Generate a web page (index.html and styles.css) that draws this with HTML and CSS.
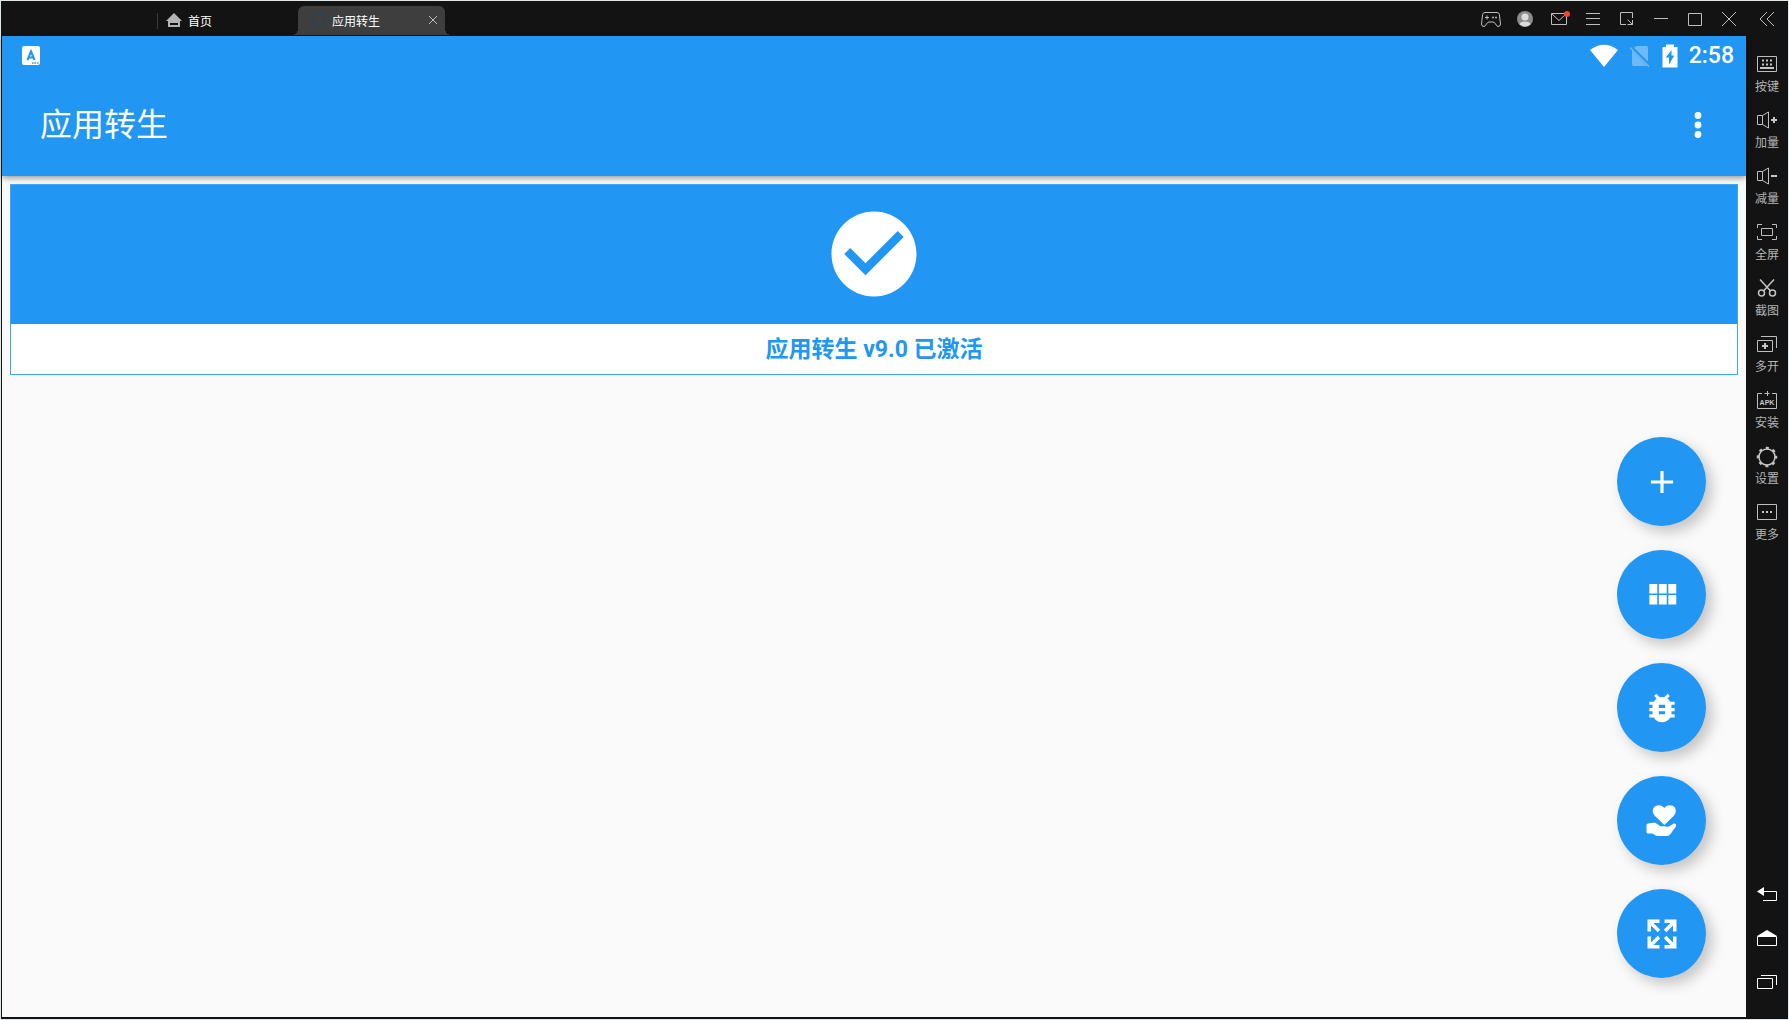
FILE: index.html
```html
<!DOCTYPE html>
<html lang="zh-CN">
<head>
    <meta charset="UTF-8">
    <meta name="viewport" content="width=device-width, initial-scale=1.0">
    <title>应用转生</title>

    <link rel="stylesheet" href="styles.css">
</head>
<body>
    <div class="window">
        <div class="main">
            <header class="titlebar">
                <nav class="tabs">
                    <a class="tab home" href="#">
                        <svg width="16" height="16" viewBox="0 0 16 16"><path fill="#b4b4b4" fill-rule="evenodd" d="M8 1 16 9H14V15H2V9H0ZM4 11V13H12V11Z"/></svg>
                        首页
                    </a>
                    <div class="tab active">
                        <svg width="14" height="16" viewBox="0 0 14 16"><circle cx="7" cy="8" r="6" fill="none" stroke="#16466f" stroke-width="1.5" stroke-dasharray="2 2"/></svg>
                        <a href="#">应用转生</a>
                        <button class="close" aria-label="Close tab">
                            <svg width="10" height="10" viewBox="0 0 10 10"><path class="line" d="M1 1l8 8M9 1l-8 8"/></svg>
                        </button>
                    </div>
                </nav>
                <div class="controls">
                    <button aria-label="Gamepad">
                        <svg class="icon" viewBox="0 0 24 24"><path class="line" d="M6 5.500H18Q20 5.500 20.400 7.500L21.500 17Q21.500 19.500 19 19.500Q18 19.500 16.500 17Q15.500 15 14 15H10Q8.500 15 7.500 17Q6 19.500 5 19.500Q2.500 19.500 2.500 17L3.600 7.500Q4 5.500 6 5.500Z"/><path class="line" d="M6 10.500h4M8 8.500v4"/><circle cx="14" cy="10.500" r="1" fill="#b4b4b4"/><circle cx="17" cy="10.500" r="1" fill="#b4b4b4"/></svg>
                    </button>
                    <button aria-label="Account">
                        <svg class="icon" viewBox="0 0 24 24"><circle cx="12" cy="12" r="8" fill="#8c8c8c"/><circle cx="12" cy="10" r="3.500" fill="#dcdcdc"/><path fill="#dcdcdc" d="M6.500 17C7 13.500 17 13.500 17.500 17C15 20.200 9 20.200 6.500 17Z"/></svg>
                    </button>
                    <button aria-label="Messages">
                        <svg class="icon" viewBox="0 0 24 24"><path class="line" d="M4.500 6.500h15v11h-15ZM4.500 6.500l7.500 7 7.500-7"/><circle cx="20" cy="7" r="3" fill="#f8432c"/></svg>
                    </button>
                    <button aria-label="Menu">
                        <svg class="icon" viewBox="0 0 24 24"><path class="line" d="M5 6.500h14M5 11.500h14M5 17.500h14"/></svg>
                    </button>
                    <button aria-label="Small window">
                        <svg class="icon" viewBox="0 0 24 24"><path class="line" d="M11 17.500H5.500V5.500H17.500V11M12.500 12.500l5 5M17.500 13v4.500h-5"/></svg>
                    </button>
                    <button aria-label="Minimize">
                        <svg class="icon" viewBox="0 0 24 24"><path class="line" d="M5 11.500h14"/></svg>
                    </button>
                    <button aria-label="Maximize">
                        <svg class="icon" viewBox="0 0 24 24"><path class="line" d="M5.500 6.500h13v12h-13Z"/></svg>
                    </button>
                    <button aria-label="Close">
                        <svg class="icon" viewBox="0 0 24 24"><path class="line" d="M5 5l14 14M19 5L5 19"/></svg>
                    </button>
                </div>
            </header>

            <div class="screen">
                <div class="appbar">
                    <div class="status">
                        <svg width="18" height="20" viewBox="0 0 18 20"><rect width="18" height="19" rx="2" fill="#fff"/><path d="M5.500 14 9 5.500 12.500 14M6.500 11.500h5" fill="none" stroke="#2196f3" stroke-width="2"/><path d="M10 17h7" stroke="#2196f3" stroke-width="1.500" stroke-dasharray="1.500 1"/></svg>
                        <div class="status-right">
                            <svg width="28" height="24" viewBox="0 0 28 24"><path fill="#fff" d="M0 6Q14 -4.500 28 6L14 23Z"/></svg>
                            <svg width="22" height="24" viewBox="0 0 22 24"><path fill="#fff" fill-opacity=".35" d="M7.500 2H17Q19 2 19 4V17.500L5 3.800ZM3 6.500 18 22H5Q3 22 3 20Z"/><path d="M1 3.500 20 22.500" stroke="#fff" stroke-opacity=".35" stroke-width="1.500"/></svg>
                            <svg width="16" height="24" viewBox="0 0 16 24"><path fill="#fff" fill-rule="evenodd" d="M4 0.500H12V3H15.500V23.500H0.500V3H4ZM9.500 6 3.800 13.500H7V20.500L12.300 11.500H9.500Z"/></svg>
                            <span class="time">2:58</span>
                        </div>
                    </div>
                    <div class="toolbar">
                        <h1>应用转生</h1>
                        <button aria-label="More options">
                            <svg width="10" height="28" viewBox="0 0 10 28"><g fill="#fff"><circle cx="5" cy="4.500" r="3.400"/><circle cx="5" cy="14" r="3.400"/><circle cx="5" cy="23.500" r="3.400"/></g></svg>
                        </button>
                    </div>
                </div>

                <div class="card">
                    <div class="card-head">
                        <svg width="102" height="102" viewBox="0 0 24 24"><path fill="#fff" d="M12 2C6.480 2 2 6.480 2 12s4.480 10 10 10 10-4.480 10-10S17.520 2 12 2zm-2 15l-5-5 1.410-1.410L10 14.170l7.590-7.590L19 8l-9 9z"/></svg>
                    </div>
                    <p class="card-text">应用转生 v9.0 已激活</p>
                </div>

                <div class="fabs">
                    <button aria-label="Add">
                        <svg viewBox="0 0 24 24"><path d="M19 13h-6v6h-2v-6H5v-2h6V5h2v6h6v2z"/></svg>
                    </button>
                    <button aria-label="Modules">
                        <svg viewBox="0 0 24 24"><path d="M4 11h5V5H4v6zm0 7h5v-6H4v6zm6 0h5v-6h-5v6zm6 0h5v-6h-5v6zm-6-7h5V5h-5v6zm6-6v6h5V5h-5z"/></svg>
                    </button>
                    <button aria-label="Debug">
                        <svg viewBox="0 0 24 24"><path d="M20 8h-2.810c-.450-.780-1.070-1.450-1.820-1.960L17 4.410 15.590 3l-2.170 2.170C12.960 5.060 12.490 5 12 5c-.490 0-.960.060-1.410.170L8.410 3 7 4.410l1.620 1.630C7.880 6.550 7.260 7.220 6.810 8H4v2h2.090c-.050.330-.090.660-.090 1v1H4v2h2v1c0 .340.040.670.090 1H4v2h2.810c1.040 1.790 2.970 3 5.190 3s4.150-1.210 5.190-3H20v-2h-2.090c.050-.330.090-.660.090-1v-1h2v-2h-2v-1c0-.340-.040-.670-.090-1H20V8zm-6 8h-4v-2h4v2zm0-4h-4v-2h4v2z"/></svg>
                    </button>
                    <button aria-label="Donate">
                        <svg viewBox="0 0 38 38"><path d="M21.300 23 12 14C8.500 10.500 9.500 5.500 13 3.800C16.500 2.300 19.500 3.500 21.300 6C23.100 3.500 26.200 2.300 29.600 3.800C33.200 5.500 34.200 10.500 30.600 14ZM3.500 23Q3.500 21.500 5 21.500L10 20.800C14 20.300 15 23.500 18 24.300H21C24 25 25.500 25 27.500 23.500L30 22C31.500 20.800 33.800 22 33 24.200L27.500 32Q26 34 24 34H15Q13 34 11 32.500L9.500 31.500H5Q3.500 31.500 3.500 30Z"/></svg>
                    </button>
                    <button aria-label="Full screen">
                        <svg viewBox="0 0 38 38"><path d="M4.500 4.500H16.500V8H10.500L17.200 14.700 14.700 17.200 8 10.500V16.500H4.500ZM33.500 4.500V16.500H30V10.500L23.300 17.200 20.800 14.700 27.500 8H21.500V4.500ZM4.500 33.500V21.500H8V27.500L14.700 20.800 17.200 23.300 10.500 30H16.500V33.500ZM33.500 33.500H21.500V30H27.500L20.800 23.300 23.300 20.800 30 27.500V21.500H33.500Z"/></svg>
                    </button>
                </div>
            </div>
        </div>

        <aside class="sidebar">
            <button class="collapse" aria-label="Collapse">
                <svg class="icon" viewBox="0 0 24 24"><path class="line" d="M12 5l-7 7 7 7M19 5l-7 7 7 7"/></svg>
            </button>
            <div class="tools">
                <button>
                    <svg class="icon" viewBox="0 0 24 24"><path class="line" d="M2.500 4.500h19v15h-19Z"/><path d="M7 8.500h11M7 12.500h11" fill="none" stroke="#c4c4c4" stroke-width="2" stroke-dasharray="2 2"/><path d="M5 16h14" stroke="#c4c4c4" stroke-width="2"/></svg>
                    按键
                </button>
                <button>
                    <svg class="icon" viewBox="0 0 24 24"><path class="line" d="M2.500 7.500h5v9h-5ZM7.500 7.500l6-3.500v16l-6-3.500"/><path d="M16 12h6M19 9v6" stroke="#c4c4c4" stroke-width="2"/></svg>
                    加量
                </button>
                <button>
                    <svg class="icon" viewBox="0 0 24 24"><path class="line" d="M2.500 7.500h5v9h-5ZM7.500 7.500l6-3.500v16l-6-3.500"/><path d="M16 12h6" stroke="#c4c4c4" stroke-width="2"/></svg>
                    减量
                </button>
                <button>
                    <svg class="icon" viewBox="0 0 24 24"><path class="line" d="M6.500 8.500h11v7h-11ZM2.500 8V4.500H7M17 4.500h4.500V8M21.500 16v3.500H17M7 19.500H2.500V16"/></svg>
                    全屏
                </button>
                <button>
                    <svg class="icon" viewBox="0 0 24 24"><g fill="none" stroke="#c4c4c4" stroke-width="1.500"><path d="M5 3.500 15.500 15M19 3.500 8.500 15"/><circle cx="6.500" cy="17" r="3"/><circle cx="17.500" cy="17" r="3"/></g></svg>
                    截图
                </button>
                <button>
                    <svg class="icon" viewBox="0 0 24 24"><path class="line" d="M2.500 8.500h15v11h-15ZM6 4.500h15.500V16"/><path d="M7 14h6M10 11v6" stroke="#c4c4c4" stroke-width="2"/></svg>
                    多开
                </button>
                <button>
                    <svg class="icon" viewBox="0 0 24 24"><path class="line" d="M7 5.500H2.500v15h19v-15H17M9.500 5.500h5M12.500 3v5"/><text x="12" y="17" text-anchor="middle">APK</text></svg>
                    安装
                </button>
                <button>
                    <svg class="icon" viewBox="0 0 24 24"><circle cx="12" cy="13" r="8" fill="none" stroke="#c4c4c4" stroke-width="1.500"/><circle cx="12" cy="13" r="9" fill="none" stroke="#c4c4c4" stroke-width="2.500" stroke-dasharray="3 4.070" stroke-dashoffset="1.500"/></svg>
                    设置
                </button>
                <button>
                    <svg class="icon" viewBox="0 0 24 24"><path class="line" d="M2.500 4.500h19v15h-19Z"/><path d="M7 12h10" stroke="#c4c4c4" stroke-width="2" stroke-dasharray="2 2"/></svg>
                    更多
                </button>
            </div>
            <div class="nav">
                <button aria-label="Back">
                    <svg class="icon" viewBox="0 0 24 24"><path fill="#fff" d="M2 9.500 9 5V14Z"/><path class="line" d="M9 9.500h12.500v9H8"/></svg>
                </button>
                <button aria-label="Home">
                    <svg class="icon" viewBox="0 0 24 24"><path fill="#fff" d="M12 4 22 10H2Z"/><path class="line" d="M2.500 10.500h19v9h-19Z"/></svg>
                </button>
                <button aria-label="Recent apps">
                    <svg class="icon" viewBox="0 0 24 24"><path class="line" d="M2.500 8.500h15v10h-15ZM6 5.500h15.500V15"/></svg>
                </button>
            </div>
        </aside>
    </div>
</body>
</html>
```
FILE: styles.css
```css
* {
    box-sizing: border-box;
}

body, html {
    margin: 0;
    height: 100%;
}

body {
    padding: 1px;
    background-color: #e2e8ea;
    font-family: Roboto, "Noto Sans CJK SC", sans-serif;
}

button {
    display: flex;
    align-items: center;
    justify-content: center;
    padding: 0;
    border: none;
    background: none;
    font: inherit;
    color: inherit;
    cursor: pointer;
}

a {
    color: inherit;
    text-decoration: none;
}

svg {
    display: block;
    flex: none;
}

.icon {
    width: 24px;
    height: 24px;
}

.line {
    fill: none;
    stroke: #bebebe;
}

.window {
    display: flex;
    height: 100%;
    border: solid #0e1217;
    border-width: 0 1px 2px;
    background-color: #131313;
}

.main {
    flex: 1;
    display: flex;
    flex-direction: column;
}

/* Title bar */
.titlebar {
    display: flex;
    justify-content: space-between;
    height: 35px;
    padding-top: 1px;
    font-size: 12px;
    color: #fff;
}

.tabs {
    display: flex;
    align-items: flex-end;
    padding: 0 0 1px 155px;
}

.tab {
    display: flex;
    align-items: center;
    gap: 6px;
    height: 29px;
    padding-bottom: 1px;
}

.home {
    position: relative;
    width: 141px;
    padding-left: 9px;
}

.home::before {
    content: "";
    position: absolute;
    left: 0;
    top: 7px;
    width: 1px;
    height: 16px;
    background-color: #3c3c3c;
}

.active {
    position: relative;
    width: 147px;
    padding: 0 7px 1px 14px;
    border-radius: 6px 6px 0 0;
    background-color: #3e3e3e;
}

.active::before, .active::after {
    content: "";
    position: absolute;
    bottom: 0;
    width: 6px;
    height: 6px;
}

.active::before {
    right: 100%;
    background: radial-gradient(circle at 0 0, transparent 6px, #3e3e3e 6px);
}

.active::after {
    left: 100%;
    background: radial-gradient(circle at 100% 0, transparent 6px, #3e3e3e 6px);
}

.close {
    margin-left: auto;
}

.controls {
    display: flex;
}

.controls button {
    width: 34px;
}

/* Device screen */
.screen {
    position: relative;
    flex: 1;
    background-color: #fafafa;
}

.appbar {
    display: flex;
    flex-direction: column;
    height: 140px;
    background-color: #2196f3;
    box-shadow: 0 2px 6px rgba(0, 0, 0, 0.4);
    color: #fff;
}

.status {
    display: flex;
    align-items: center;
    justify-content: space-between;
    height: 40px;
    padding: 0 12px 0 20px;
}

.status-right {
    display: flex;
    align-items: center;
    gap: 11px;
}

.time {
    font-size: 23px;
    font-weight: 500;
    line-height: 40px;
}

.toolbar {
    flex: 1;
    display: flex;
    align-items: center;
    justify-content: space-between;
    padding: 0 43px 2px 38px;
}

.toolbar h1 {
    margin: 0;
    font-size: 32px;
    font-weight: 400;
    line-height: 48px;
}

.card {
    margin: 8px;
    border: 1px solid #42a5f5;
    background-color: #fff;
}

.card-head {
    display: flex;
    justify-content: center;
    padding: 18px 0 19px;
    background-color: #2196f3;
}

.card-text {
    margin: 0;
    padding: 10px 0 8px;
    font-size: 23px;
    font-weight: 700;
    line-height: 32px;
    text-align: center;
    color: #2196f3;
}

/* Floating buttons */
.fabs {
    position: absolute;
    right: 40px;
    bottom: 39px;
    display: flex;
    flex-direction: column;
    gap: 24px;
}

.fabs button {
    width: 89px;
    height: 89px;
    border-radius: 50%;
    background-color: #2196f3;
    box-shadow: 6px 6px 14px rgba(0, 0, 0, 0.22);
}

.fabs svg {
    width: 38px;
    height: 38px;
    fill: #fff;
}

/* Sidebar */
.sidebar {
    display: flex;
    flex-direction: column;
    width: 41px;
    padding: 1px 0 13px 1px;
    font-size: 12px;
    color: #b4b4b4;
}

.collapse {
    height: 34px;
}

.tools {
    flex: 1;
    padding-top: 12px;
}

.tools button {
    flex-direction: column;
    gap: 3px;
    width: 100%;
    height: 56px;
    padding: 4px 0 9px;
    line-height: 16px;
}

.tools text {
    font-family: "Liberation Sans", sans-serif;
    font-size: 7px;
    font-weight: 700;
    fill: #c4c4c4;
}

.nav button {
    width: 100%;
    height: 44px;
}

.nav .line {
    stroke: #fff;
}
```
